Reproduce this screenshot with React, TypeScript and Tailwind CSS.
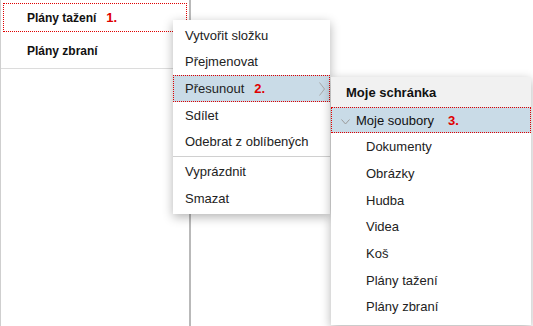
import React from 'react'

const menuItems = ['Vytvořit složku', 'Přejmenovat', 'Přesunout', 'Sdílet', 'Odebrat z oblíbených']
const menuItems2 = ['Vyprázdnit', 'Smazat']
const folders = ['Dokumenty', 'Obrázky', 'Hudba', 'Videa', 'Koš', 'Plány tažení', 'Plány zbraní']

function ChevronRight() {
  return (
    <svg width="6" height="14" viewBox="0 0 6 14" className="absolute right-[4px] top-[6px]">
      <polyline points="0.5,0.5 5.5,7 0.5,13.5" fill="none" stroke="#a8a8a8" strokeWidth="1" />
    </svg>
  )
}

function ChevronDown() {
  return (
    <svg width="9" height="6" viewBox="0 0 9 6" className="mt-[2px]">
      <polyline points="0.5,0.5 4.5,5 8.5,0.5" fill="none" stroke="#9a9a9a" strokeWidth="1" />
    </svg>
  )
}

export default function App() {
  return (
    <div
      className="relative w-[533px] h-[326px] bg-white overflow-hidden text-[13px] text-[#222]"
      style={{ fontFamily: '"Liberation Sans", Arial, sans-serif' }}
    >
      {/* left tree */}
      <div className="w-[191px] h-full border-l border-[#cfcfcf] border-r-2 border-r-[#b9b9b9]">
        <div className="pt-[3px] px-[2px]">
          <div className="h-[29px] flex items-center pl-[23px] border border-dotted border-[#e00000] font-bold text-[12px] text-[#111]">
            Plány tažení
            <span className="ml-[10px] text-[#e00000] text-[13px]">1.</span>
          </div>
        </div>
        <div className="h-[37px] pb-[3px] pt-[4px] flex items-center pl-[26px] font-bold text-[12px] text-[#111] border-b border-[#dcdcdc]">
          Plány zbraní
        </div>
      </div>

      {/* context menu */}
      <div className="absolute left-[173px] top-[20px] w-[157px] bg-white pt-[2px] pb-[2px] shadow-[0_3px_10px_rgba(0,0,0,0.3)]">
        {menuItems.map((t) =>
          t === 'Přesunout' ? (
            <div
              key={t}
              className="relative h-[26.67px] flex items-center pl-[11px] bg-[#c9dbe7] border border-dotted border-[#e00000]"
            >
              {t}
              <span className="ml-[10px] font-bold text-[#e00000]">2.</span>
              <ChevronRight />
            </div>
          ) : (
            <div key={t} className="h-[26.67px] flex items-center pl-[12px]">
              {t}
            </div>
          )
        )}
        <div className="h-px bg-[#d0d0d0] my-[1px]" />
        {menuItems2.map((t) => (
          <div key={t} className="h-[26.67px] flex items-center pl-[12px]">
            {t}
          </div>
        ))}
      </div>

      {/* submenu */}
      <div className="absolute left-[331px] top-[77px] w-[200px] bg-white pb-[5px] shadow-[0_3px_10px_rgba(0,0,0,0.3)]">
        <div className="h-[29.67px] pt-[2px] flex items-center pl-[15px] bg-[#f1f1f1] font-bold text-[#111]">
          Moje schránka
        </div>
        <div className="h-[26.67px] pt-[2px] flex items-center gap-[6px] pl-[9px] bg-[#c9dbe7] border border-dotted border-[#e00000] text-[#111]">
          <ChevronDown />
          Moje soubory
          <span className="ml-[8px] font-bold text-[#e00000]">3.</span>
        </div>
        {folders.map((t) => (
          <div key={t} className="h-[26.67px] pt-[1px] flex items-center pl-[35px]">
            {t}
          </div>
        ))}
      </div>
    </div>
  )
}
